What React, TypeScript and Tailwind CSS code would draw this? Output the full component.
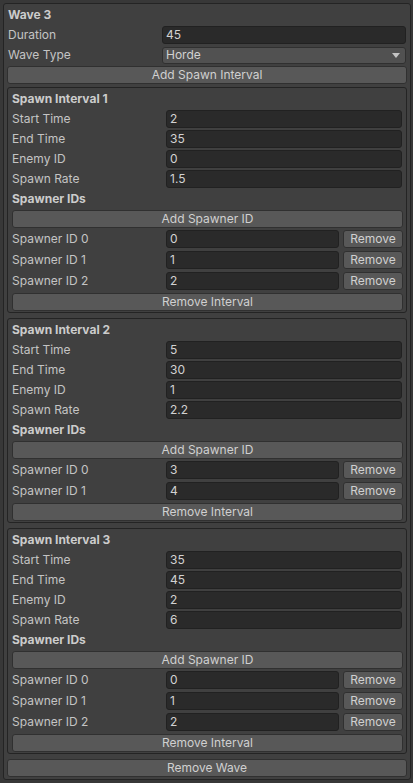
import React from 'react';

type Interval = {
  start: string;
  end: string;
  enemy: string;
  rate: string;
  spawners: string[];
};

const intervals: Interval[] = [
  { start: '2', end: '35', enemy: '0', rate: '1.5', spawners: ['0', '1', '2'] },
  { start: '5', end: '30', enemy: '1', rate: '2.2', spawners: ['3', '4'] },
  { start: '35', end: '45', enemy: '2', rate: '6', spawners: ['0', '1', '2'] },
];

const Button: React.FC<{ label: string; className?: string }> = ({ label, className = '' }) => (
  <div
    className={`flex h-[18px] items-center justify-center rounded-[3px] border border-[#303030] bg-[#585858] text-[#d0d0d0] ${className}`}
  >
    {label}
  </div>
);

const Input: React.FC<{ value: string; className?: string }> = ({ value, className = '' }) => (
  <div
    className={`flex h-[18px] items-center rounded-[3px] border border-[#212121] bg-[#2a2a2a] pl-[3px] text-[#d2d2d2] ${className}`}
  >
    {value}
  </div>
);

const Field: React.FC<{ label: string; value: string }> = ({ label, value }) => (
  <div className="flex h-[18px] items-center pr-[1px]">
    <span className="w-[154px] shrink-0">{label}</span>
    <Input value={value} className="flex-1" />
  </div>
);

const Heading: React.FC<{ text: string }> = ({ text }) => (
  <div className="flex h-[18px] items-center font-bold text-[#cccccc]">{text}</div>
);

const IntervalBox: React.FC<{ data: Interval; index: number }> = ({ data, index }) => (
  <div className="flex flex-col gap-[2px] rounded-[3px] border border-[#242424] bg-[#404040] pt-[2px] pb-[1px] pl-[4px] pr-[3px]">
    <Heading text={`Spawn Interval ${index + 1}`} />
    <Field label="Start Time" value={data.start} />
    <Field label="End Time" value={data.end} />
    <Field label="Enemy ID" value={data.enemy} />
    <Field label="Spawn Rate" value={data.rate} />
    <Heading text="Spawner IDs" />
    <Button label="Add Spawner ID" />
    {data.spawners.map((s, i) => (
      <div key={i} className="flex h-[19px] items-start">
        <span className="flex h-[18px] w-[154px] shrink-0 items-center">Spawner ID {i}</span>
        <Input value={s} className="flex-1" />
        <Button label="Remove" className="ml-[4px] w-[60px] shrink-0" />
      </div>
    ))}
    <Button label="Remove Interval" />
  </div>
);

export default function App() {
  return (
    <div
      className="h-[783px] w-[413px] overflow-hidden bg-[#383838] pt-[3px] pl-[3px] pr-[2px] text-[12px] leading-[18px] text-[#c4c4c4]"
      style={{ fontFamily: 'Inter, "Noto Sans", sans-serif' }}
    >
      <div className="flex flex-col rounded-[3px] border border-[#242424] bg-[#404040] pt-[2px] pb-[2px] pl-[3px] pr-[3px]">
        <div className="pl-[1px]">
          <Heading text="Wave 3" />
        </div>
        <div className="mt-[2px] pl-[1px]">
          <Field label="Duration" value="45" />
        </div>
        <div className="mt-[2px] flex h-[18px] items-center pl-[1px] pr-[1px]">
          <span className="w-[154px] shrink-0">Wave Type</span>
          <div className="flex h-[17px] flex-1 items-center justify-between rounded-[3px] border border-[#303030] bg-[#515151] pl-[3px] pr-[5px] text-[#d2d2d2]">
            <span>Horde</span>
            <svg width="8" height="5" viewBox="0 0 8 5">
              <path d="M0 0 L8 0 L4 5 Z" fill="#c4c4c4" />
            </svg>
          </div>
        </div>
        <Button label="Add Spawn Interval" className="mt-[2px]" />
        <div className="mt-[3px] flex flex-col gap-[5px]">
          {intervals.map((iv, i) => (
            <IntervalBox key={i} data={iv} index={i} />
          ))}
        </div>
        <Button label="Remove Wave" className="mt-[5px]" />
      </div>
    </div>
  );
}
